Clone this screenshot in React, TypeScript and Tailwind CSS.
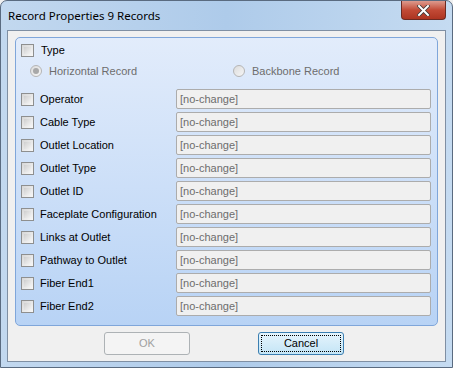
import React from "react";

const fields = [
  "Operator",
  "Cable Type",
  "Outlet Location",
  "Outlet Type",
  "Outlet ID",
  "Faceplate Configuration",
  "Links at Outlet",
  "Pathway to Outlet",
  "Fiber End1",
  "Fiber End2",
];

const CheckBox = () => (
  <div className="w-[13px] h-[13px] border border-[#8e8f8f] bg-gradient-to-br from-[#d7d7d7] to-[#f8f8f8] p-[2px] shrink-0">
    <div className="w-full h-full bg-gradient-to-br from-[#cfcfcf] to-[#f4f4f4]" />
  </div>
);

const Radio = ({ checked }: { checked?: boolean }) => (
  <div className="w-[12px] h-[12px] rounded-full border border-[#b5b5b5] bg-gradient-to-br from-[#dcdcdc] to-[#f6f6f6] flex items-center justify-center shrink-0">
    {checked && <div className="w-[6px] h-[6px] rounded-full bg-[#a8a8a8]" />}
  </div>
);

const App = () => {
  return (
    <div
      className="w-[453px] h-[368px] bg-[#f0f0f0] overflow-hidden"
      style={{ fontFamily: '"Liberation Sans", Arial, sans-serif' }}
    >
      {/* Window frame */}
      <div className="w-[453px] h-[368px] rounded-t-[7px] border border-[#5a6b80] bg-gradient-to-r from-[#c2d8ef] via-[#aecbea] to-[#c5dbf1] flex flex-col">
        {/* Title bar */}
        <div className="h-[29px] flex items-start justify-between pl-[7px] pr-[6px]">
          <span
            className="mt-[6px] text-[11.5px] text-black"
            style={{ fontFamily: '"Noto Sans", "Open Sans", sans-serif' }}
          >
            Record Properties 9 Records
          </span>
          <div className="w-[45px] h-[19px] rounded-b-[4px] border border-t-0 border-[#6b2a22] bg-gradient-to-b from-[#dc9a8e] via-[#c24a36] to-[#ad3421] flex items-center justify-center">
            <svg width="13" height="11" viewBox="0 0 13 11">
              <path
                d="M2 1 L11 10 M11 1 L2 10"
                stroke="#3a3a3a"
                strokeWidth="3.6"
                strokeLinecap="square"
              />
              <path
                d="M2 1 L11 10 M11 1 L2 10"
                stroke="#ffffff"
                strokeWidth="2"
                strokeLinecap="square"
              />
            </svg>
          </div>
        </div>

        {/* Client area */}
        <div className="mx-[6px] h-[332px] border border-[#7f8fa3] bg-[#f0f0f0] px-[7px] pt-[6px]">
          <div className="h-[289px] rounded-[5px] border border-[#7fa6da] bg-gradient-to-b from-[#e2ecfb] to-[#b8d3f5] pl-[5px] pr-[6px] pt-[5px] text-[11px] text-black">
            <div className="flex items-center gap-[7px] h-[15px]">
              <CheckBox />
              <span>Type</span>
            </div>
            <div className="flex items-center h-[14px] mt-[6px] pl-[9px] text-[#6d6d6d]">
              <div className="flex items-center gap-[7px] w-[203px]">
                <Radio checked />
                <span>Horizontal Record</span>
              </div>
              <div className="flex items-center gap-[7px]">
                <Radio />
                <span>Backbone Record</span>
              </div>
            </div>
            <div className="mt-[11px] flex flex-col gap-[3px]">
              {fields.map((f) => (
                <div key={f} className="flex items-center h-[20px]">
                  <div className="flex items-center gap-[6px] w-[155px]">
                    <CheckBox />
                    <span>{f}</span>
                  </div>
                  <div className="flex-1 h-[20px] border border-[#acacac] rounded-[2px] bg-[#f0f0f0] flex items-center pl-[3px] text-[#6d6d6d]">
                    [no-change]
                  </div>
                </div>
              ))}
            </div>
          </div>

          <div className="flex items-start mt-[6px] pl-[89px] gap-[68px] text-[11px]">
            <div className="w-[86px] h-[23px] rounded-[3px] border border-[#adb2b5] bg-[#f4f4f4] flex items-center justify-center text-[#a0a0a0]">
              OK
            </div>
            <div className="w-[86px] h-[23px] rounded-[3px] border border-[#3c7fb1] bg-gradient-to-b from-[#e5f4fc] to-[#c4e5f6] p-[2px]">
              <div className="w-full h-full border border-dotted border-black flex items-center justify-center text-black">
                Cancel
              </div>
            </div>
          </div>
        </div>
      </div>
    </div>
  );
};

export default App;
